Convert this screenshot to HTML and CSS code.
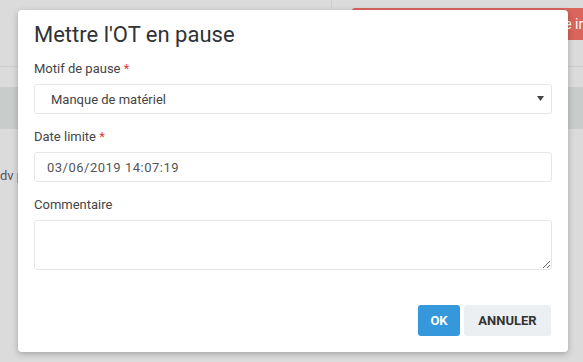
FILE: index.html
```html
<!doctype html>
<html lang="fr">
  <head>
    <meta charset="utf-8">
    <meta name="viewport" content="width=device-width, initial-scale=1">
    <title>Mettre l'OT en pause</title>
    <link rel="stylesheet" href="styles.css">
  </head>
  <body>
    <div class="page">
      <header class="page-header">
        <div class="top-strip"><div class="top-cell"></div></div>
        <div class="alert">Erreur : date de mise en pause invalide</div>
      </header>
      <div class="toolbar"></div>
      <p class="page-text">dv pour intervention</p>
    </div>

    <div class="modal">
      <h1 class="modal-title">Mettre l'OT en pause</h1>
      <form class="modal-form">
        <div class="form-group">
          <label class="form-label">Motif de pause <span class="required">*</span></label>
          <div class="select-wrap">
            <select class="form-control form-select">
              <option>Manque de matériel</option>
              <option>Attente client</option>
              <option>Autre</option>
            </select>
            <svg class="select-arrow" width="7" height="5" viewBox="0 0 7 5"><path d="M0 0h7L3.5 5z" fill="#444"/></svg>
          </div>
        </div>
        <div class="form-group">
          <label class="form-label">Date limite <span class="required">*</span></label>
          <input class="form-control form-date" type="text" value="03/06/2019 14:07:19">
        </div>
        <div class="form-group">
          <label class="form-label">Commentaire</label>
          <textarea class="form-control form-textarea"></textarea>
        </div>
        <div class="modal-footer">
          <button type="button" class="btn btn-ok">OK</button>
          <button type="button" class="btn btn-cancel">Annuler</button>
        </div>
      </form>
    </div>
  </body>
</html>
```

FILE: styles.css
```css
body {
  margin: 0;
  padding: 0;
  font-family: Roboto, "Liberation Sans", Arial, sans-serif;
  background-color: #dbdbdb;
  overflow: hidden;
}

.page-header {
  border-bottom: 1px solid #cfcfcf;
  height: 66px;
}

.top-strip {
  height: 8px;
}

.top-cell {
  width: 331px;
  height: 8px;
  border-right: 1px solid #cdcdcd;
}

.alert {
  margin-left: 352px;
  height: 32px;
  line-height: 32px;
  padding-left: 32px;
  background-color: #d9655c;
  color: #fff;
  font-size: 14px;
  white-space: nowrap;
  overflow: hidden;
  border-radius: 3px 0 0 3px;
}

.toolbar {
  margin-top: 20px;
  height: 42px;
  background-color: #c8cdcc;
}

.page-text {
  margin: 38px 0 0;
  font-size: 13px;
  color: #555;
  line-height: 18px;
  white-space: nowrap;
}

.modal {
  position: absolute;
  top: 10px;
  left: 18px;
  width: 550px;
  height: 342px;
  box-sizing: border-box;
  padding: 0 16px 16px;
  background: #fff;
  border-radius: 4px;
  box-shadow: 0 2px 6px rgba(0, 0, 0, 0.25);
  display: flex;
  flex-direction: column;
}

.modal-title {
  margin: 11px 0 11px;
  font-size: 22px;
  line-height: 28px;
  font-weight: 400;
  color: #2f3337;
}

.modal-form {
  display: flex;
  flex-direction: column;
  flex: 1;
}

.form-group {
  margin-bottom: 14px;
}

.form-label {
  display: block;
  margin-bottom: 6px;
  font-size: 13px;
  line-height: 18px;
  color: #444;
}

.required {
  color: #e53935;
}

.form-control {
  display: block;
  width: 100%;
  box-sizing: border-box;
  border: 1px solid #e6e6e6;
  border-radius: 3px;
  background: #fff;
  font-family: inherit;
  font-size: 13px;
  color: #444;
  outline: none;
}

.select-wrap {
  position: relative;
}

.form-select {
  height: 30px;
  padding: 0 16px;
  appearance: none;
  -webkit-appearance: none;
}

.select-arrow {
  position: absolute;
  right: 8px;
  top: 12px;
}

.form-date {
  height: 30px;
  padding: 0 12px;
  color: #555;
  letter-spacing: 0.5px;
}

.form-textarea {
  height: 50px;
  padding: 6px 12px;
  resize: vertical;
}

.modal-footer {
  margin-top: auto;
  padding-right: 1px;
  display: flex;
  justify-content: flex-end;
  gap: 4px;
}

.btn {
  height: 31px;
  padding: 0 14px;
  border: none;
  border-radius: 3px;
  font-family: inherit;
  font-size: 13px;
  font-weight: 700;
  text-transform: uppercase;
  cursor: pointer;
}

.btn-ok {
  width: 42px;
  padding: 0;
  background-color: #3498db;
  color: #fff;
}

.btn-cancel {
  width: 87px;
  padding: 0;
  background-color: #eceff1;
  color: #333;
}
```
